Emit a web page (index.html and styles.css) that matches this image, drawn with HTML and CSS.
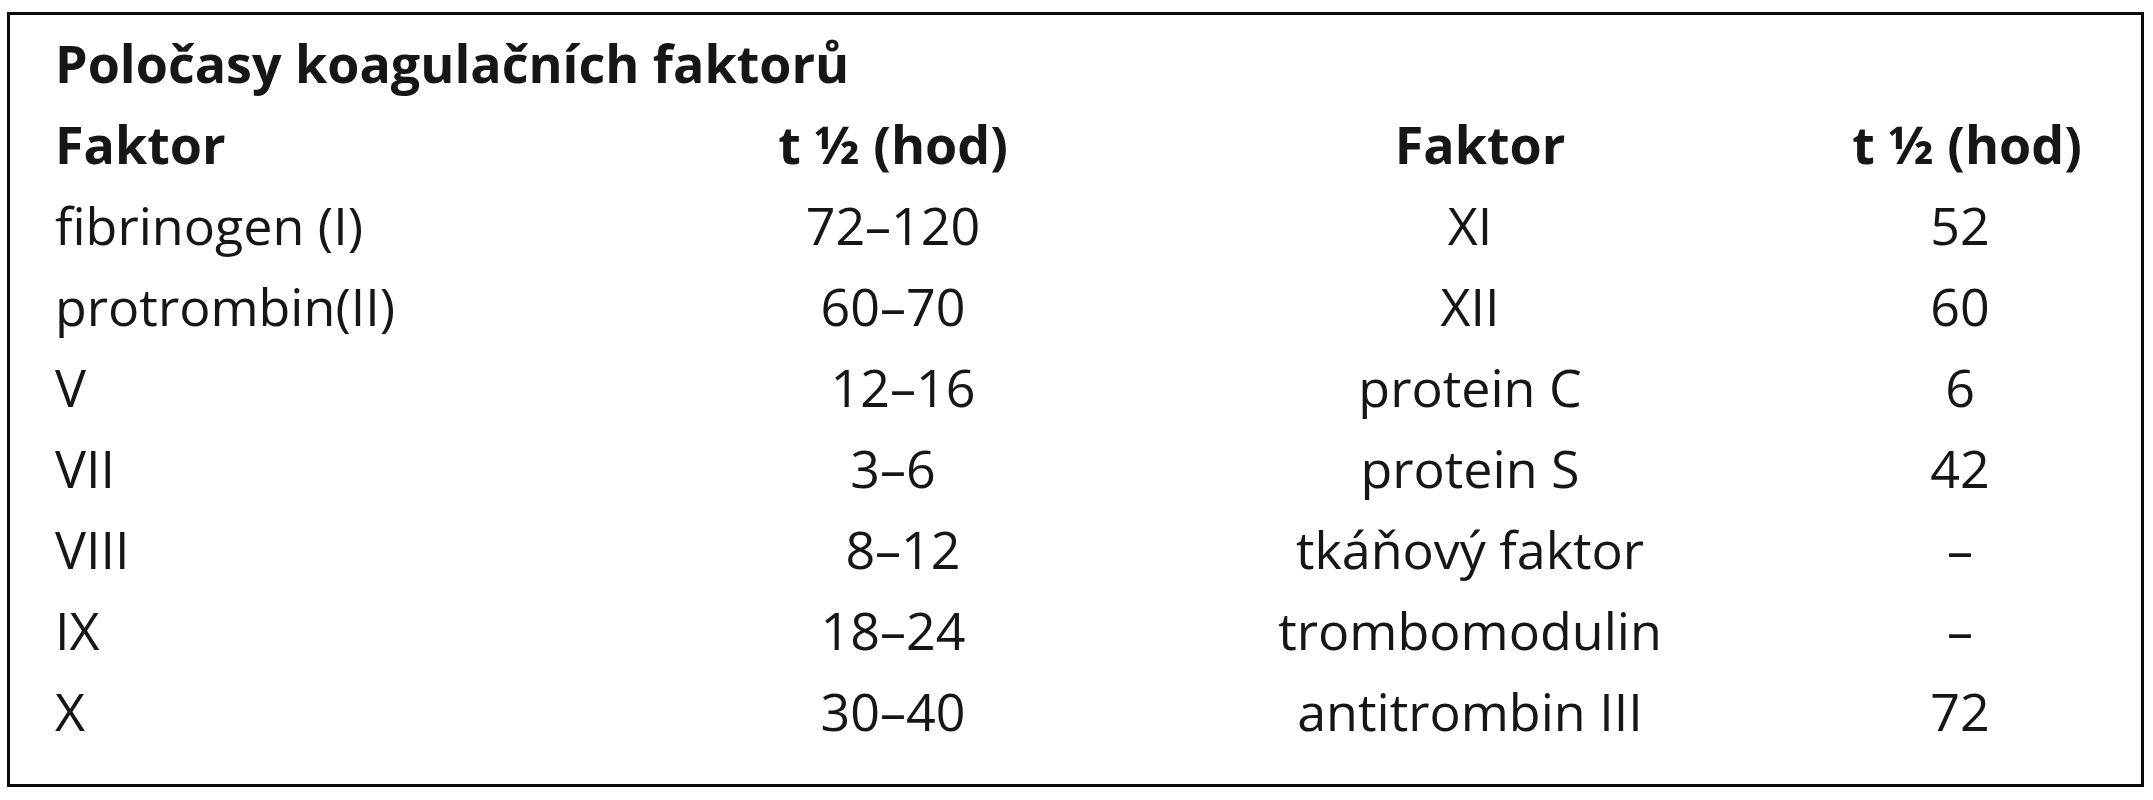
FILE: index.html
```html
<!DOCTYPE html>
<html lang="cs">
<head>
<meta charset="utf-8">
<title>Poločasy koagulačních faktorů</title>
<link rel="stylesheet" href="styles.css">
</head>
<body>
<div class="panel">
  <div class="title">Poločasy koagulačních faktorů</div>
  <div class="grid">
    <div class="cell c1 head">Faktor</div>
    <div class="cell c2 head">t ½ (hod)</div>
    <div class="cell c3 head h3">Faktor</div>
    <div class="cell c4 head h4">t ½ (hod)</div>

    <div class="cell c1">fibrinogen (I)</div>
    <div class="cell c2">72–120</div>
    <div class="cell c3">XI</div>
    <div class="cell c4">52</div>

    <div class="cell c1">protrombin(II)</div>
    <div class="cell c2">60–70</div>
    <div class="cell c3">XII</div>
    <div class="cell c4">60</div>

    <div class="cell c1">V</div>
    <div class="cell c2 nudge">12–16</div>
    <div class="cell c3">protein C</div>
    <div class="cell c4">6</div>

    <div class="cell c1">VII</div>
    <div class="cell c2">3–6</div>
    <div class="cell c3">protein S</div>
    <div class="cell c4">42</div>

    <div class="cell c1">VIII</div>
    <div class="cell c2 nudge">8–12</div>
    <div class="cell c3">tkáňový faktor</div>
    <div class="cell c4">–</div>

    <div class="cell c1">IX</div>
    <div class="cell c2">18–24</div>
    <div class="cell c3">trombomodulin</div>
    <div class="cell c4">–</div>

    <div class="cell c1">X</div>
    <div class="cell c2">30–40</div>
    <div class="cell c3">antitrombin III</div>
    <div class="cell c4">72</div>
  </div>
</div>
</body>
</html>
```
FILE: styles.css
```css
html, body {
  margin: 0;
  padding: 0;
  background: #ffffff;
}

body {
  font-family: "Open Sans", Lato, "DejaVu Sans", sans-serif;
  color: #161616;
}

.panel {
  box-sizing: border-box;
  margin: 12px 0 0 7px;
  width: 2137px;
  height: 775px;
  border: 3px solid #0a0a0a;
  padding: 7px 25px 0 45px;
}

.title {
  font-size: 52px;
  line-height: 81px;
  font-weight: 700;
  white-space: nowrap;
}

.grid {
  display: grid;
  grid-template-columns: 595px 486px 668px 312px;
  grid-auto-rows: 81px;
  font-size: 52px;
  line-height: 81px;
}

.cell {
  white-space: nowrap;
}

.head {
  font-weight: 700;
}

.c1 {
  text-align: left;
}

.c2,
.c3,
.c4 {
  text-align: center;
}

.nudge {
  padding-left: 20px;
}

.h3 {
  padding-left: 20px;
}

.h4 {
  padding-left: 14px;
}
```
